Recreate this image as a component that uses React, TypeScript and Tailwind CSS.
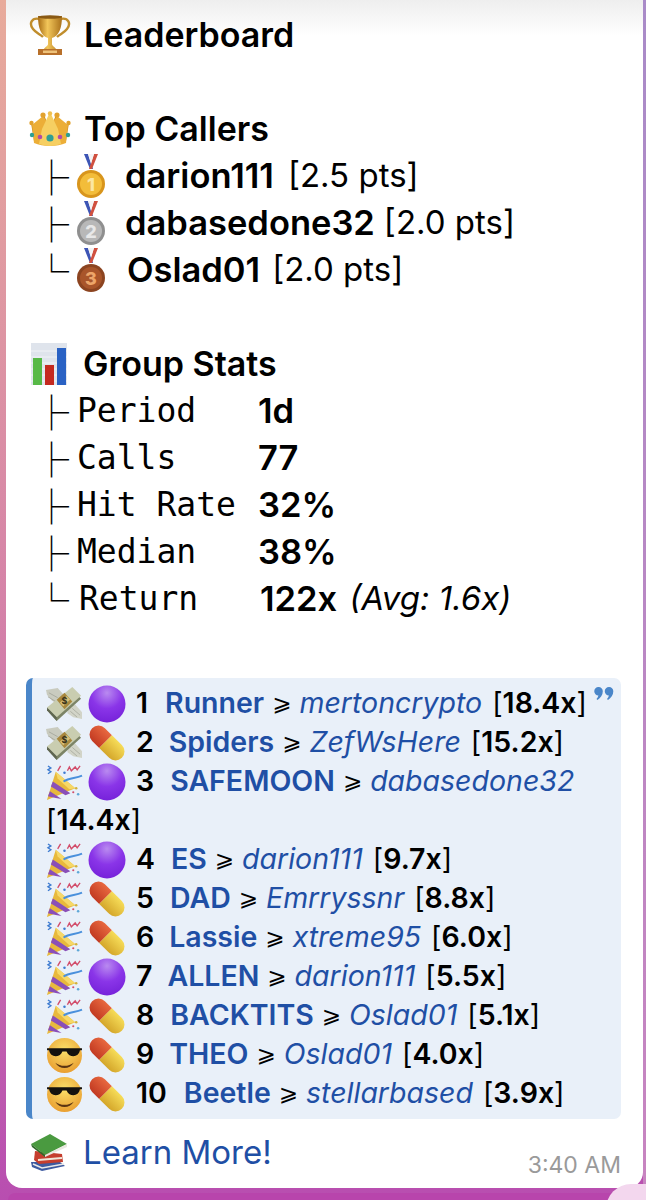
import React from 'react';

type IconProps = { className?: string };

const Trophy = ({ className }: IconProps) => (
  <svg viewBox="0 0 42 42" className={className}>
    <defs>
      <linearGradient id="gold" x1="0" x2="1" y1="0" y2="0">
        <stop offset="0" stopColor="#a86c14" />
        <stop offset="0.4" stopColor="#f2c65a" />
        <stop offset="1" stopColor="#a9701a" />
      </linearGradient>
    </defs>
    <path d="M11 5 C2 3 0 10 4 15 C7 19 11 20 14 23 M31 5 C40 3 42 10 38 15 C35 19 31 20 28 23" fill="none" stroke="#c08d2c" strokeWidth="2.4" />
    <path d="M9 2 H33 C33 14 30 22 23 24 V30 C23 32 26 33 27 35 H15 C16 33 19 32 19 30 V24 C12 22 9 14 9 2 Z" fill="url(#gold)" />
    <ellipse cx="21" cy="3" rx="12" ry="1.8" fill="#8a5a14" />
    <rect x="9" y="35" width="24" height="6" fill="#b8702a" />
    <rect x="14" y="36.5" width="14" height="2.5" fill="#eec27a" />
  </svg>
);

const Crown = ({ className }: IconProps) => (
  <svg viewBox="0 0 42 36" className={className}>
    <path d="M2 12 L9 22 L15 4 L21 18 L27 4 L33 22 L40 12 L37 30 H5 Z" fill="#c98a20" />
    <path d="M14 5 L3 14 L5 32 C14 36 28 36 37 32 L39 14 L28 5 L21 15 Z" fill="#ecae38" />
    <path d="M21 1 L29 18 L32 33 C24 35.5 18 35.5 10 33 L13 18 Z" fill="#f6cf62" />
    <circle cx="14" cy="4" r="2.6" fill="#e2a22e" />
    <circle cx="28" cy="4" r="2.6" fill="#e2a22e" />
    <circle cx="21" cy="2.5" r="2.2" fill="#f0c050" />
    <circle cx="2.5" cy="12" r="2.2" fill="#e2a22e" />
    <circle cx="39.5" cy="12" r="2.2" fill="#e2a22e" />
    <circle cx="11" cy="26" r="2.3" fill="#b04aa8" />
    <circle cx="31" cy="26" r="2.3" fill="#b04aa8" />
    <circle cx="21" cy="27" r="3.6" fill="#2f9f93" />
    <circle cx="3" cy="24" r="2.2" fill="#2f9f93" />
    <circle cx="39" cy="24" r="2.2" fill="#2f9f93" />
  </svg>
);

const Medal = ({ className, n, from, to, ink }: IconProps & { n: string; from: string; to: string; ink: string }) => (
  <svg viewBox="0 0 30 44" className={className}>
    <path d="M8 0 L14 15 H17 L12 0 Z" fill="#3d55b5" />
    <path d="M22 0 L16 15 H13 L18 0 Z" fill="#d0503f" />
    <path d="M12 0 L15 10 L18 0 Z" fill="#f4f4f4" />
    <circle cx="15" cy="30" r="14" fill={to} />
    <circle cx="15" cy="30" r="11" fill={from} />
    <text x="15" y="36.5" textAnchor="middle" fontSize="18" fontWeight="800" fontFamily="Inter, sans-serif" fill={ink}>{n}</text>
  </svg>
);

const Chart = ({ className }: IconProps) => (
  <svg viewBox="0 0 36 42" className={className}>
    <rect width="36" height="42" fill="#dfe4ec" />
    <path d="M0 8 H36 M0 14 H36 M0 20 H36 M0 26 H36 M0 32 H36 M0 38 H36" stroke="#f1f3f7" strokeWidth="1" />
    <rect x="2" y="15" width="9" height="27" fill="#57b947" />
    <rect x="14" y="22" width="9" height="20" fill="#c4291f" />
    <rect x="26" y="5" width="9" height="37" fill="#2a62c4" />
  </svg>
);

const Money = ({ className }: IconProps) => (
  <svg viewBox="0 0 38 36" className={className}>
    <path d="M0 3 L12 1 L20 10 L12 18 L6 14 L1 8 Z" fill="#c9cbbf" />
    <path d="M3 6 L12 11 M2 10 L10 15" stroke="#a9ab9f" strokeWidth="1" />
    <path d="M22 20 L30 18 L37 26 L37 33 L28 31 L22 27 Z" fill="#d2d4c8" />
    <path d="M27 22 L35 29 M25 25 L32 31" stroke="#aeb0a4" strokeWidth="1" />
    <path d="M1 24 L27 3 L36 12 L11 35 Z" fill="#7c8466" />
    <path d="M1 21 L27 0 L36 9 L11 31 Z" fill="#c9cdb0" />
    <path d="M11 13 L19 6 L27 15 L19 23 Z" fill="#a8883e" />
    <path d="M16 18 L23 11" stroke="#d8c078" strokeWidth="5" />
    <text x="19" y="18" textAnchor="middle" fontSize="9" fontWeight="800" fontFamily="Inter, sans-serif" fill="#3a3418">$</text>
    <path d="M1 21 L11 31 V35 L1 24 Z" fill="#5f6650" />
  </svg>
);

const PurpleDot = ({ className }: IconProps) => (
  <svg viewBox="0 0 38 38" className={className}>
    <defs>
      <radialGradient id="dot" cx="0.5" cy="0.2" r="0.85">
        <stop offset="0" stopColor="#b98af0" />
        <stop offset="0.5" stopColor="#8a35e8" />
        <stop offset="1" stopColor="#7420d8" />
      </radialGradient>
    </defs>
    <circle cx="19" cy="19" r="18.5" fill="url(#dot)" />
  </svg>
);

const Pill = ({ className }: IconProps) => (
  <svg viewBox="0 0 38 38" className={className}>
    <defs>
      <linearGradient id="pillRed" x1="0" x2="0" y1="0" y2="1">
        <stop offset="0" stopColor="#e8683f" />
        <stop offset="1" stopColor="#c23a22" />
      </linearGradient>
      <linearGradient id="pillYellow" x1="0" x2="0" y1="0" y2="1">
        <stop offset="0" stopColor="#f6dc58" />
        <stop offset="1" stopColor="#d4a62a" />
      </linearGradient>
    </defs>
    <g transform="rotate(45 19 19)">
      <path d="M17 10 H7 A9 9 0 0 0 7 28 H17 Z" fill="url(#pillRed)" />
      <path d="M17 10 H31 A9 9 0 0 1 31 28 H17 Z" fill="url(#pillYellow)" />
    </g>
  </svg>
);

const Popper = ({ className }: IconProps) => (
  <svg viewBox="0 0 38 38" className={className}>
    <path d="M1 37 L10 8 L30 25 Z" fill="#e8b93c" />
    <path d="M4 28 L16 36 L10 35 L2 33 Z M7 18 L25 30 L20 32 L5 23 Z" fill="#8a4fb8" />
    <path d="M10 8 L30 25 L24 26 L12 15 Z" fill="#f6d868" />
    <path d="M18 18 C24 14 30 15 37 12" fill="none" stroke="#4a90dc" strokeWidth="2" />
    <path d="M12 7 L15 2 M22 7 L24 3 L26 7 L30 3 L32 6 L35 2" fill="none" stroke="#d24c6a" strokeWidth="1.4" />
    <path d="M2 2 L5 4 L2 6 L5 8 L2 10" fill="none" stroke="#3d7bd0" strokeWidth="1.4" />
    <circle cx="19" cy="9" r="1.3" fill="#3d7bd0" />
    <circle cx="31" cy="25" r="1.3" fill="#d2b13c" />
    <circle cx="33" cy="31" r="1.3" fill="#5fa8d8" />
    <circle cx="28" cy="29" r="1.1" fill="#d24c6a" />
  </svg>
);

const Cool = ({ className }: IconProps) => (
  <svg viewBox="0 0 36 36" className={className}>
    <defs>
      <radialGradient id="face" cx="0.5" cy="0.35" r="0.7">
        <stop offset="0" stopColor="#fbe06a" />
        <stop offset="1" stopColor="#e89a2c" />
      </radialGradient>
    </defs>
    <circle cx="18" cy="18" r="17" fill="url(#face)" />
    <path d="M1 11 H35 V13 H33 C32 20 23 21 20 14 H16 C13 21 4 20 3 13 H1 Z" fill="#15120e" />
    <path d="M9 25 C14 29 22 29 27 25 C23 32 13 32 9 25 Z" fill="#5b3512" />
  </svg>
);

const Books = ({ className }: IconProps) => (
  <svg viewBox="0 0 38 38" className={className}>
    <path d="M1 28 L30 28 L35 32 L12 37 L2 33 Z" fill="#3d5aa0" />
    <path d="M3 30 L12 34 L34 30" fill="none" stroke="#e8e8e8" strokeWidth="1.6" />
    <path d="M5 17 L32 20 L33 28 L9 30 L4 26 Z" fill="#c53e2e" />
    <path d="M8 26 L32 24" stroke="#f0e6d8" strokeWidth="2" />
    <path d="M1 10 L20 0 L37 10 L15 21 Z" fill="#4a9a40" />
    <path d="M1 10 L15 21 L15 23 L2 13 Z" fill="#2f6a2a" />
    <path d="M15 21 L37 10 L37 13 L15 23 Z" fill="#e8e8df" />
  </svg>
);

const Tree = ({ end, className }: { end?: boolean; className?: string }) => (
  <span className={`font-["Noto_Sans_CJK_SC",sans-serif] font-light text-[35px] leading-[47px] text-black ${className ?? ''}`}>
    {end ? '└' : '├'}
  </span>
);

const callers = [
  { name: 'darion111', pts: '[2.5 pts]', n: '1', from: '#f3bd3a', to: '#d8951c', ink: '#fbe6a2', tree: false, gap: 'ml-[19px]', ptsGap: 'ml-[14px]' },
  { name: 'dabasedone32', pts: '[2.0 pts]', n: '2', from: '#b8b8b8', to: '#8f8f8f', ink: '#e8e8e8', tree: false, gap: 'ml-[19px]', ptsGap: 'ml-[9px]' },
  { name: 'Oslad01', pts: '[2.0 pts]', n: '3', from: '#a9552a', to: '#8c4420', ink: '#eda66a', tree: true, gap: 'ml-[21px]', ptsGap: 'ml-[12px]' },
];

const stats = [
  { label: 'Period', value: '1d', tree: false, shift: 'ml-0' },
  { label: 'Calls', value: '77', tree: false, shift: 'ml-0' },
  { label: 'Hit Rate', value: '32%', tree: false, shift: 'ml-0' },
  { label: 'Median', value: '38%', tree: false, shift: 'ml-0' },
  { label: 'Return', value: '122x', tree: true, shift: 'ml-[2px]' },
];

const calls = [
  { icon: Money, dot: true, n: '1', name: 'Runner', by: 'mertoncrypto', x: '18.4x', gap: 'ml-[17px]' },
  { icon: Money, dot: false, n: '2', name: 'Spiders', by: 'ZefWsHere', x: '15.2x', gap: 'ml-[15px]' },
  { icon: Popper, dot: true, n: '3', name: 'SAFEMOON', by: 'dabasedone32', x: '14.4x', gap: 'ml-[16px]' },
  { icon: Popper, dot: true, n: '4', name: 'ES', by: 'darion111', x: '9.7x', gap: 'ml-[16px]' },
  { icon: Popper, dot: false, n: '5', name: 'DAD', by: 'Emrryssnr', x: '8.8x', gap: 'ml-[16px]' },
  { icon: Popper, dot: false, n: '6', name: 'Lassie', by: 'xtreme95', x: '6.0x', gap: 'ml-[15px]' },
  { icon: Popper, dot: true, n: '7', name: 'ALLEN', by: 'darion111', x: '5.5x', gap: 'ml-[15px]' },
  { icon: Popper, dot: false, n: '8', name: 'BACKTITS', by: 'Oslad01', x: '5.1x', gap: 'ml-[16px]' },
  { icon: Cool, dot: false, n: '9', name: 'THEO', by: 'Oslad01', x: '4.0x', gap: 'ml-[15px]' },
  { icon: Cool, dot: false, n: '10', name: 'Beetle', by: 'stellarbased', x: '3.9x', gap: 'ml-[17px]' },
];

export default function App() {
  return (
    <div className="relative w-[646px] h-[1200px] overflow-hidden bg-gradient-to-b from-[#e8ab9b] via-[#d583a8] to-[#b84eb0] font-['Inter',sans-serif] text-black">
      <div className="absolute top-0 bottom-0 right-0 w-[3px] bg-gradient-to-b from-[#a98bc8] to-[#c884c0]"></div>

      <div className="relative ml-[6px] w-[637px] h-[1188px] rounded-bl-[16px] rounded-br-[16px] bg-gradient-to-b from-[#eeeeee] via-white via-[3%] to-white pt-[11px]">
        <div className="pl-[23px] text-[34.5px] leading-[47px]">
          <div className="flex items-center h-[47px] font-semibold text-[34px]">
            <Trophy className="w-[42px] h-[42px]" />
            <span className="ml-[13px]">Leaderboard</span>
          </div>
          <div className="h-[47px]"></div>
          <div className="flex items-center h-[47px] font-semibold text-[34px]">
            <Crown className="w-[42px] h-[36px]" />
            <span className="ml-[13px]">Top Callers</span>
          </div>
          {callers.map(c => (
            <div key={c.name} className="flex items-center h-[47px] pl-[5px]">
              <Tree end={c.tree} className="w-[43px]" />
              <Medal n={c.n} from={c.from} to={c.to} ink={c.ink} className="w-[30px] h-[44px] -ml-[1px]" />
              <span className={`${c.gap} font-semibold`}>{c.name}</span>
              <span className={`${c.ptsGap} text-[33px]`}>{c.pts}</span>
            </div>
          ))}
          <div className="h-[47px]"></div>
          <div className="flex items-center h-[47px] font-semibold text-[34px]">
            <Chart className="w-[36px] h-[42px] ml-[2px]" />
            <span className="ml-[16px]">Group Stats</span>
          </div>
          {stats.map(s => (
            <div key={s.label} className="flex items-center h-[47px] pl-[5px]">
              <Tree end={s.tree} className="w-[43px]" />
              <span className={`w-[181px] shrink-0 font-['DejaVu_Sans_Mono',monospace] text-[33px] whitespace-pre ${s.shift}`}>{s.label}</span>
              <span className="font-semibold">{s.value}</span>
              {s.tree && <span className="ml-[12px] italic text-[33px]">(Avg: 1.6x)</span>}
            </div>
          ))}
        </div>

        <div className="relative mt-[56px] ml-[20px] w-[595px] h-[441px] rounded-[7px] border-l-[6px] border-[#4a86c9] bg-[#e9f0f9] pl-[14px] pr-[4px] pt-[5px] text-[28.5px] leading-[39px]">
          {calls.map(c => {
            const Icon = c.icon;
            return (
              <div key={c.n}>
                <Icon className="inline-block w-[37px] h-[37px] -my-[6px] align-middle -translate-y-[1px]" />
                {c.dot
                  ? <PurpleDot className="inline-block w-[38px] h-[38px] -my-[6px] ml-[5px] align-middle -translate-y-[1px]" />
                  : <Pill className="inline-block w-[38px] h-[38px] -my-[6px] ml-[5px] align-middle -translate-y-[1px]" />}
                <span className="ml-[10px] font-semibold">{c.n}</span>
                <span className={`${c.gap} font-semibold text-[#1f4fa5]`}>{c.name}</span>
                <span className="inline-block mx-[8px] font-['DejaVu_Sans',sans-serif] text-[23px] leading-none -translate-y-[2px]">⩾</span>
                <span className="italic text-[#1f4fa5]">{c.by}</span>
                <span className="ml-[2px]"> [<span className="font-semibold">{c.x}</span>]</span>
              </div>
            );
          })}
          <svg viewBox="0 0 20 13" className="absolute left-[562px] top-[9px] w-[20px] h-[13px] fill-[#4a86c9]">
            <path d="M4.5 0 A4.2 4.2 0 0 1 8.8 4.2 C8.8 8 6.5 11 3.5 13 L2.5 12 C3.6 10.8 4.2 9.6 4.4 8.4 A4.2 4.2 0 0 1 4.5 0 Z" />
            <path d="M15 0 A4.2 4.2 0 0 1 19.3 4.2 C19.3 8 17 11 14 13 L13 12 C14.1 10.8 14.7 9.6 14.9 8.4 A4.2 4.2 0 0 1 15 0 Z" />
          </svg>
        </div>

        <div className="flex items-center h-[47px] mt-[10px] pl-[23px] text-[33px] text-[#1f4fa5]">
          <Books className="w-[38px] h-[38px] ml-[1px]" />
          <span className="ml-[15px]">Learn More!</span>
        </div>
        <span className="absolute right-[22px] bottom-[6px] text-[23px] text-[#9a9a9a]">3:40 AM</span>
      </div>

      <div className="mt-[5px] ml-[8px] mr-[8px] h-[7px] rounded-t-[10px] bg-[#b845ac]"></div>
      <div className="absolute left-[606px] top-[1184px] w-[70px] h-[50px] rounded-full bg-[#f3d7ee]"></div>
    </div>
  );
}
